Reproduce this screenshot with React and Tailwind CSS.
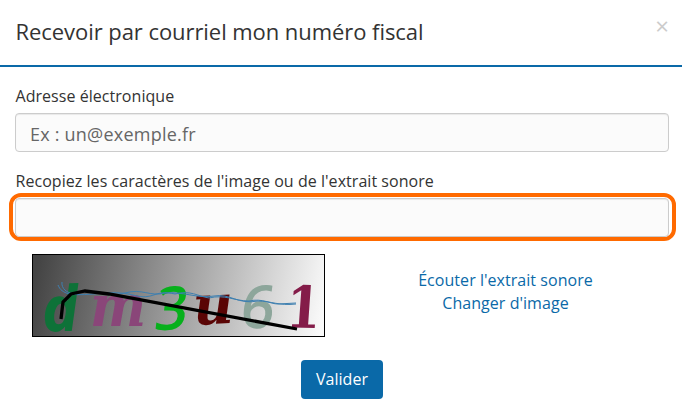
const glyphs = [
  { c: "d", fill: "#0e7238", font: "'Open Sans'", style: "italic", size: 63, weight: 700, t: "translate(11 77.5) rotate(-1) skewX(3) scale(.99 1)" },
  { c: "m", fill: "#8a4679", font: "'DejaVu Serif'", style: "italic", size: 57, weight: 700, t: "translate(58 72) scale(.93 1)" },
  { c: "3", fill: "#07b01c", font: "'Open Sans'", style: "normal", size: 60, weight: 600, t: "translate(121 76.5) rotate(-3) skewX(-10) scale(.96 1)" },
  { c: "u", fill: "#5a0505", font: "'DejaVu Serif'", style: "italic", size: 57, weight: 700, t: "translate(162 71) rotate(-3) scale(.97 .97)" },
  { c: "6", fill: "#8da69b", font: "'Open Sans'", style: "normal", size: 60, weight: 600, t: "translate(207 73.5) rotate(2) skewX(-5) scale(.98 1)" },
  { c: "1", fill: "#841c49", font: "'DejaVu Serif'", style: "normal", size: 58, weight: 700, t: "translate(253 73.5) rotate(1) skewX(-3) scale(.86 1)" },
];

function CodeImage() {
  return (
    <svg width="293" height="83" viewBox="0 0 293 83" className="block overflow-visible">
      <defs>
        <linearGradient id="shade" gradientUnits="userSpaceOnUse" x1="4" y1="15" x2="290" y2="72">
          <stop offset="0" stopColor="#444" />
          <stop offset="1" stopColor="#fafafa" />
        </linearGradient>
      </defs>
      <rect x=".5" y=".5" width="292" height="82" fill="url(#shade)" stroke="#000" />
      {glyphs.map((g) => (
        <text key={g.c} transform={g.t} fill={g.fill} fontFamily={g.font + ", sans-serif"} fontStyle={g.style} fontWeight={g.weight} fontSize={g.size}>
          {g.c}
        </text>
      ))}
      <g fill="none" stroke="#3d7fb0" strokeWidth="1">
        <path d="M26 31C28 36 31 38 37 40C57 43 79 35 101 41S121 35 143 40C159 36 165 42 177 44C193 40 202 47 217 47C231 44 238 50 246 50L264 49" />
        <path d="M30 28C29 34 35 40 42 39C62 35 76 44 93 39S118 43 133 39C150 37 166 45 182 42S206 51 226 47C239 47 247 52 264 50" />
      </g>
      <path d="M29 65L31 48L39 40L53 37L77 40L265 75" fill="none" stroke="#000" strokeWidth="3.3" />
    </svg>
  );
}

export default function App() {
  return (
    <main className="h-[415px] w-[682px] overflow-hidden bg-white font-['Open_Sans',sans-serif] text-[16px] leading-[23px] tracking-[0.045px] text-[#333]">
      <header className="flex h-[67px] items-start justify-between border-b-2 border-[#0a69a8] pr-[13px] pl-[15.5px]">
        <h1 className="pt-[16px] text-[22px] leading-[31px] tracking-[-0.06px]">Recevoir par courriel mon numéro fiscal</h1>
        <button aria-label="Fermer" className="mt-[13px] h-[26px] text-[24px] leading-[26px] text-[#ccc]">×</button>
      </header>
      <form className="px-[13px]">
        <div className="px-[2px] pt-[18px]">
          <label className="block pl-[0.5px]">Adresse électronique</label>
          <input placeholder="Ex : un@exemple.fr" className="mt-[5px] block h-[39px] w-[654px] rounded-[4px] border border-[#ccc] bg-[#fbfbfb] px-[14px] pt-[2px] text-[18px] tracking-[0.22px] shadow-[inset_0_1px_1px_rgba(0,0,0,0.075)] placeholder:text-[#666]" />
        </div>
        <div className="pt-[18px]">
          <label className="block pl-[2.5px]">Recopiez les caractères de l'image ou de l'extrait sonore</label>
          <div className="-ml-[4px] h-[48px] w-[667px] rounded-[12px] border-4 border-[#ff6a00] py-[1px] pl-[2px]">
            <input aria-label="Code" className="block h-[39px] w-[654px] rounded-[4px] border border-[#ccc] bg-[#fbfbfb] shadow-[inset_0_1px_1px_rgba(0,0,0,0.075)]" />
          </div>
        </div>
        <div className="flex pt-[13px] pl-[19px]">
          <CodeImage />
          <div className="ml-[17px] flex w-[327px] flex-col items-center pt-[15px] text-[#0a69a8]">
            <a>Écouter l'extrait sonore</a>
            <a>Changer d'image</a>
          </div>
        </div>
        <div className="flex justify-center pt-[23px] pl-[2px]">
          <button type="button" className="h-[39px] w-[82px] rounded-[4px] bg-[#0a69a8] text-white">Valider</button>
        </div>
      </form>
    </main>
  );
}
